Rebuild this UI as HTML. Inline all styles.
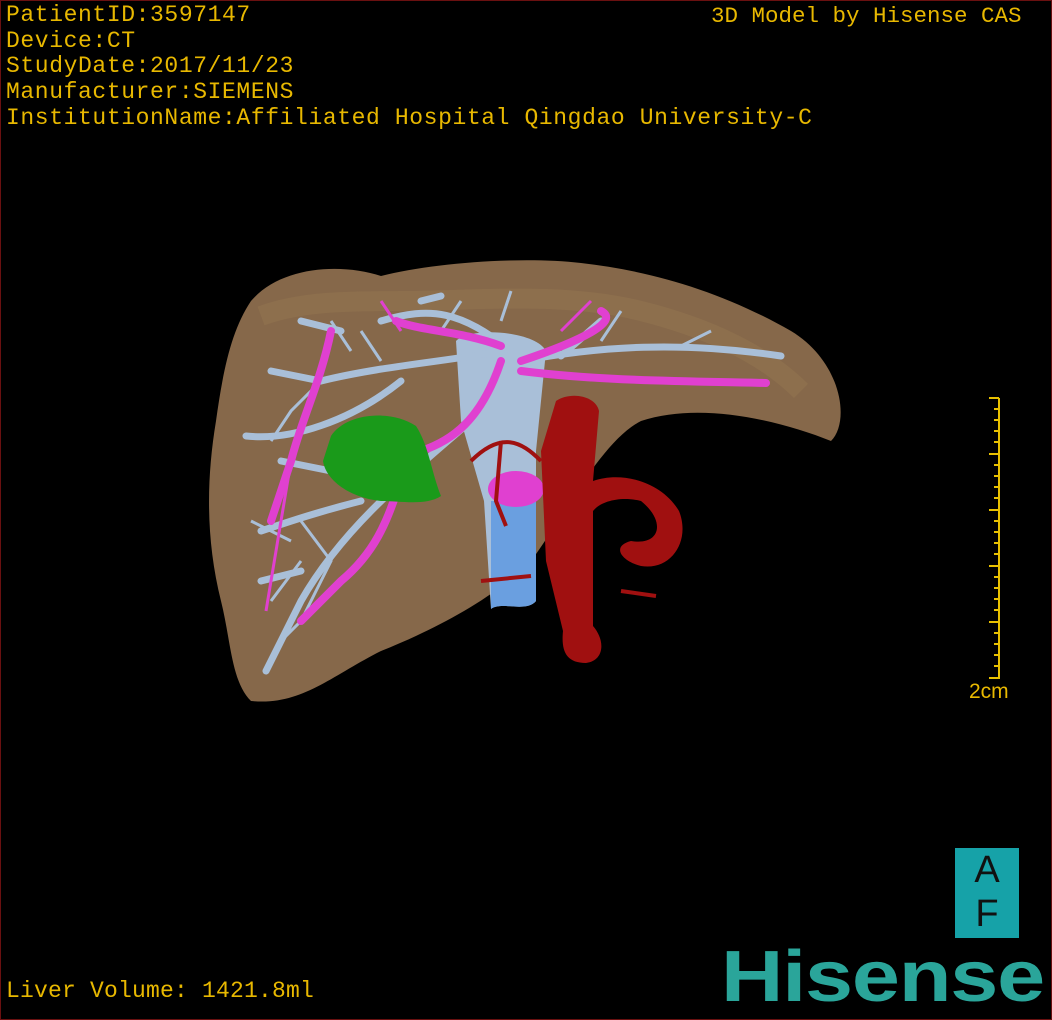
<!DOCTYPE html>
<html><head><meta charset="utf-8"><style>
html,body{margin:0;padding:0;background:#000}
#f{position:relative;width:1050px;height:1018px;border:1px solid #6a1010;background:#000;overflow:hidden}
.t{position:absolute;color:#e8b800;font-family:"Liberation Mono",monospace;font-size:23px;line-height:25.7px;white-space:pre;letter-spacing:0.6px}
</style></head><body><div id="f">
<div class="t" style="left:5px;top:2px">PatientID:3597147
Device:CT
StudyDate:2017/11/23
Manufacturer:SIEMENS
InstitutionName:Affiliated Hospital Qingdao University-C</div>
<div class="t" style="left:710px;top:3px;font-size:22.5px;letter-spacing:0">3D Model by Hisense CAS</div>
<div class="t" style="left:5px;top:978px;font-size:23px;letter-spacing:0.2px">Liver Volume: 1421.8ml</div>
<div class="t" style="left:968px;top:678px;font-family:'Liberation Sans',sans-serif;font-size:21px;letter-spacing:0">2cm</div>
<svg style="position:absolute;left:0;top:0" width="1050" height="1018">
<g stroke="#e8c000" stroke-width="2">
<line x1="998" y1="397" x2="998" y2="678"/>
<line x1="988" y1="397" x2="998" y2="397"/><line x1="993" y1="408" x2="998" y2="408"/><line x1="993" y1="419" x2="998" y2="419"/><line x1="993" y1="430" x2="998" y2="430"/><line x1="993" y1="441" x2="998" y2="441"/>
<line x1="988" y1="453" x2="998" y2="453"/><line x1="993" y1="464" x2="998" y2="464"/><line x1="993" y1="475" x2="998" y2="475"/><line x1="993" y1="486" x2="998" y2="486"/><line x1="993" y1="497" x2="998" y2="497"/>
<line x1="988" y1="509" x2="998" y2="509"/><line x1="993" y1="520" x2="998" y2="520"/><line x1="993" y1="531" x2="998" y2="531"/><line x1="993" y1="542" x2="998" y2="542"/><line x1="993" y1="553" x2="998" y2="553"/>
<line x1="988" y1="565" x2="998" y2="565"/><line x1="993" y1="576" x2="998" y2="576"/><line x1="993" y1="587" x2="998" y2="587"/><line x1="993" y1="598" x2="998" y2="598"/><line x1="993" y1="609" x2="998" y2="609"/>
<line x1="988" y1="621" x2="998" y2="621"/><line x1="993" y1="632" x2="998" y2="632"/><line x1="993" y1="643" x2="998" y2="643"/><line x1="993" y1="654" x2="998" y2="654"/><line x1="993" y1="665" x2="998" y2="665"/>
<line x1="988" y1="677" x2="998" y2="677"/></g>
<!-- liver -->
<path d="M250,300 C280,265 340,262 380,275 C430,262 520,255 580,262 C650,270 720,290 790,330 C840,360 850,420 830,440 C780,420 700,400 640,420 C600,440 560,520 530,560 C490,600 430,630 380,650 C330,675 300,705 250,700 C230,680 230,640 220,600 C205,540 205,480 215,420 C222,370 230,330 250,300Z" fill="#86684a"/>
<path d="M260,315 C300,300 350,300 400,300 C470,300 560,290 640,310 C700,325 760,350 800,390" stroke="#937550" stroke-width="20" fill="none" opacity=".5"/>
<!-- IVC -->
<path d="M455,340 C470,325 535,330 545,350 L535,450 L535,600 C525,612 500,600 490,608 L483,500 L460,420Z" fill="#a9bfd8"/>
<path d="M490,500 L535,500 L535,600 C525,612 500,600 490,608Z" fill="#6a9fe0"/>
<g stroke="#a9bfd8" stroke-width="7" fill="none" stroke-linecap="round">
<path d="M500,350 C450,360 380,365 320,380 L270,370"/>
<path d="M520,360 C600,345 680,340 780,355"/>
<path d="M510,350 C460,310 430,305 380,320"/>
<path d="M470,420 C400,480 340,530 300,600 L265,670"/>
<path d="M400,380 C350,420 290,440 245,435"/>
<path d="M360,500 C320,510 290,520 260,530"/>
<path d="M340,330 L300,320 M420,300 L440,295 M560,355 L600,320 M330,470 L280,460 M300,570 L260,580"/>
</g>
<g stroke="#a9bfd8" stroke-width="3" fill="none">
<path d="M320,380 L290,410 L270,440 M300,520 L330,560 L300,620 M350,350 L330,320 M600,340 L620,310 M680,345 L710,330 M300,560 L270,600 M290,540 L250,520 M320,600 L280,640 M440,330 L460,300 M500,320 L510,290 M380,360 L360,330"/>
</g>
<g stroke="#e040d0" stroke-width="8" fill="none" stroke-linecap="round">
<path d="M500,360 C480,420 450,440 420,450 C390,470 400,530 340,580 L300,620"/>
<path d="M500,345 C460,330 420,330 395,320"/>
<path d="M520,360 C580,340 620,320 600,310"/>
<path d="M520,370 C600,380 680,380 765,382"/>
<path d="M330,330 C320,380 300,420 290,460 L270,520"/>
</g>
<g stroke="#e040d0" stroke-width="3" fill="none"><path d="M290,460 L265,610 M420,450 L330,440 M400,330 L380,300 M560,330 L590,300"/></g>
<ellipse cx="515" cy="488" rx="28" ry="18" fill="#e040d0"/>
<!-- tumor -->
<path d="M330,435 C345,412 390,408 415,425 C428,445 430,470 440,495 C425,505 400,500 380,500 C350,497 325,480 322,460Z" fill="#1a9a1a"/>
<!-- aorta -->
<path d="M555,400 C570,390 595,395 598,410 L592,480 C620,470 660,480 678,510 C690,540 670,570 640,565 C620,560 610,545 630,540 C660,545 665,520 640,500 C620,495 600,500 592,510 L592,625 C605,640 603,660 585,662 C565,662 560,650 562,630 L545,560 L540,450Z" fill="#a01010"/>
<g stroke="#a01010" stroke-width="4" fill="none"><path d="M540,460 C520,440 500,430 470,460 M500,440 L495,500 L505,525 M480,580 L530,575 M620,590 L655,595"/></g>
</svg>
<div style="position:absolute;left:954px;top:847px;width:64px;height:90px;background:#16a2a8;color:#111;font-family:'Liberation Sans',sans-serif;font-size:38px;text-align:center;line-height:44px">A<br>F</div>
<div style="position:absolute;left:720px;top:936px;color:#2aa59a;font-family:'Liberation Sans',sans-serif;font-weight:bold;font-size:72px;line-height:80px;letter-spacing:-1px;transform:scaleX(1.2);transform-origin:0 0">Hisense</div>
</div></body></html>
